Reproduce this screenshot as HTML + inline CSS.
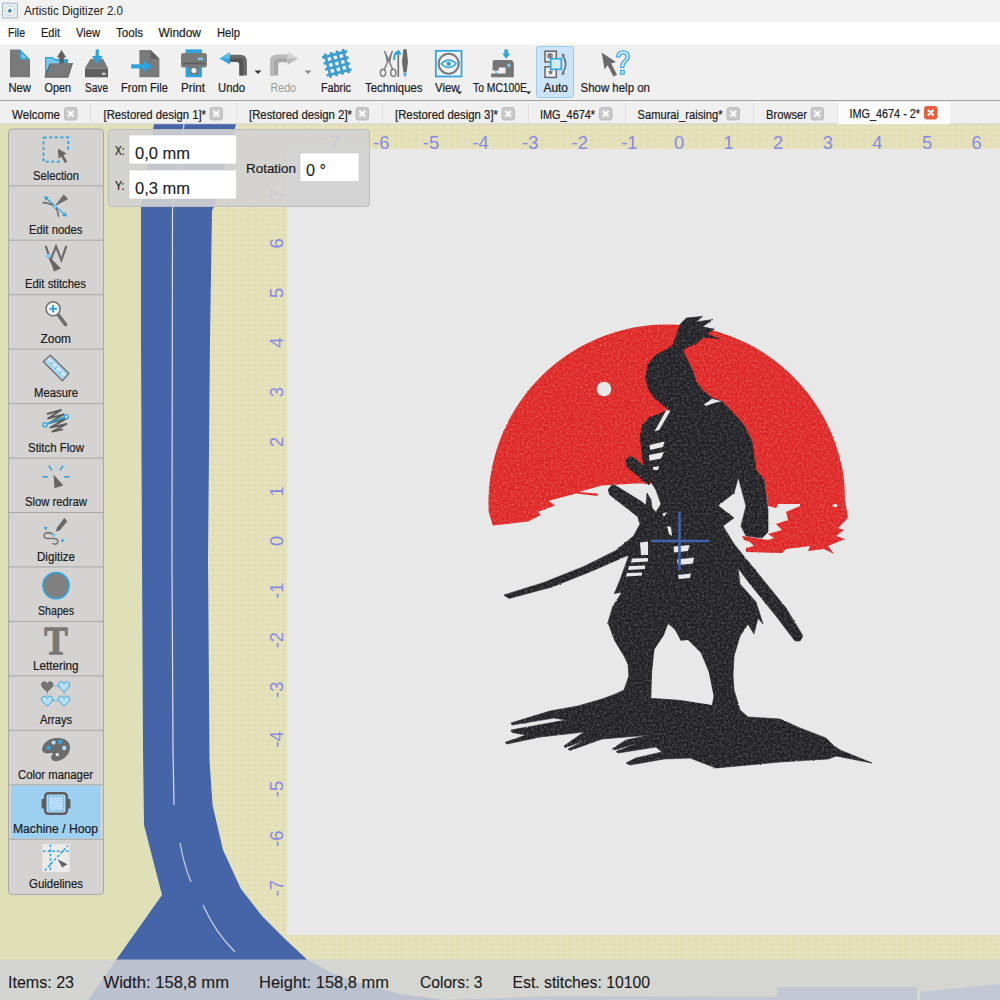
<!DOCTYPE html>
<html lang="en"><head><meta charset="utf-8"><title>Artistic Digitizer 2.0</title>
<style>
html,body{margin:0;padding:0;background:#f0f0f0;overflow:hidden}
svg{display:block}
text{font-family:"Liberation Sans",sans-serif;white-space:pre}
</style></head><body>
<svg width="1000" height="1000" viewBox="0 0 1000 1000">
<defs>
<pattern id="linen" width="7" height="5" patternUnits="userSpaceOnUse">
<rect width="7" height="5" fill="#e3e0b8"/>
<rect x="0" y="0" width="7" height="1" fill="#cfcb9e" opacity=".13"/>
<rect x="0" y="2" width="7" height="1" fill="#f3f0d6" opacity=".2"/>
<rect x="0" y="0" width="1" height="5" fill="#f3f0d6" opacity=".2"/>
<rect x="3" y="0" width="1" height="5" fill="#cfcb9e" opacity=".11"/>
<rect x="5" y="0" width="1" height="5" fill="#efecce" opacity=".12"/>
</pattern>
</defs>
<rect x="0" y="124" width="1000" height="876" fill="#dfe0b7"/>
<rect x="205" y="124" width="795" height="836" fill="url(#linen)"/>
<rect x="205" y="960" width="795" height="40" fill="#e3dfb3"/>
<rect x="287" y="149" width="713" height="786" fill="#e8e8e8"/>
<path d="M154,124 L236,124 L214,207 L212,210 L210,340 L208,560 L209.5,760 L212.5,805 L223,850 L241,889 L262,916 L286,940 L307,959.5 L330,972 L350,980 L400,994 L445,1000 L88,1000 L116,960 L162,895 L144,825 L143,750 L142,560 L141,340 L141,207 Z" fill="#4565a8"/>
<path d="M777,987 H917 V1000 H777 Z M920,992 L1000,984 V1000 H920 Z M445,1000 L560,996 L777,997 V1000 Z" fill="#6f88bd"/>
<path d="M184,124 L172.5,210 L172,560 L173,750 L174,805" fill="none" stroke="#d9dde6" stroke-width="1.2"/>
<path d="M180,843 Q184,865 191,882" fill="none" stroke="#cfd5e3" stroke-width="1.2"/>
<path d="M203,905 Q215,932 235,952" fill="none" stroke="#cfd5e3" stroke-width="1.2"/>
<text x="331.8" y="148.6" font-size="18.4" text-anchor="middle" fill="#8888e6" >-7</text>
<text x="381.4" y="148.6" font-size="18.4" text-anchor="middle" fill="#8888e6" >-6</text>
<text x="431.0" y="148.6" font-size="18.4" text-anchor="middle" fill="#8888e6" >-5</text>
<text x="480.6" y="148.6" font-size="18.4" text-anchor="middle" fill="#8888e6" >-4</text>
<text x="530.2" y="148.6" font-size="18.4" text-anchor="middle" fill="#8888e6" >-3</text>
<text x="579.8" y="148.6" font-size="18.4" text-anchor="middle" fill="#8888e6" >-2</text>
<text x="629.4" y="148.6" font-size="18.4" text-anchor="middle" fill="#8888e6" >-1</text>
<text x="679.0" y="148.6" font-size="18.4" text-anchor="middle" fill="#8888e6" >0</text>
<text x="728.6" y="148.6" font-size="18.4" text-anchor="middle" fill="#8888e6" >1</text>
<text x="778.2" y="148.6" font-size="18.4" text-anchor="middle" fill="#8888e6" >2</text>
<text x="827.8" y="148.6" font-size="18.4" text-anchor="middle" fill="#8888e6" >3</text>
<text x="877.4" y="148.6" font-size="18.4" text-anchor="middle" fill="#8888e6" >4</text>
<text x="927.0" y="148.6" font-size="18.4" text-anchor="middle" fill="#8888e6" >5</text>
<text x="976.6" y="148.6" font-size="18.4" text-anchor="middle" fill="#8888e6" >6</text>
<text transform="translate(282.6,888.2) rotate(-90)" font-size="18.4" text-anchor="middle" fill="#8888e6">-7</text>
<text transform="translate(282.6,838.6) rotate(-90)" font-size="18.4" text-anchor="middle" fill="#8888e6">-6</text>
<text transform="translate(282.6,789.0) rotate(-90)" font-size="18.4" text-anchor="middle" fill="#8888e6">-5</text>
<text transform="translate(282.6,739.4) rotate(-90)" font-size="18.4" text-anchor="middle" fill="#8888e6">-4</text>
<text transform="translate(282.6,689.8) rotate(-90)" font-size="18.4" text-anchor="middle" fill="#8888e6">-3</text>
<text transform="translate(282.6,640.2) rotate(-90)" font-size="18.4" text-anchor="middle" fill="#8888e6">-2</text>
<text transform="translate(282.6,590.6) rotate(-90)" font-size="18.4" text-anchor="middle" fill="#8888e6">-1</text>
<text transform="translate(282.6,541.0) rotate(-90)" font-size="18.4" text-anchor="middle" fill="#8888e6">0</text>
<text transform="translate(282.6,491.4) rotate(-90)" font-size="18.4" text-anchor="middle" fill="#8888e6">1</text>
<text transform="translate(282.6,441.8) rotate(-90)" font-size="18.4" text-anchor="middle" fill="#8888e6">2</text>
<text transform="translate(282.6,392.2) rotate(-90)" font-size="18.4" text-anchor="middle" fill="#8888e6">3</text>
<text transform="translate(282.6,342.6) rotate(-90)" font-size="18.4" text-anchor="middle" fill="#8888e6">4</text>
<text transform="translate(282.6,293.0) rotate(-90)" font-size="18.4" text-anchor="middle" fill="#8888e6">5</text>
<text transform="translate(282.6,243.4) rotate(-90)" font-size="18.4" text-anchor="middle" fill="#8888e6">6</text>
<text transform="translate(282.6,193.8) rotate(-90)" font-size="18.4" text-anchor="middle" fill="#8888e6">7</text>
<defs><filter id="emb" x="460" y="300" width="440" height="490" filterUnits="userSpaceOnUse" color-interpolation-filters="sRGB">
<feTurbulence type="fractalNoise" baseFrequency="0.45" numOctaves="2" seed="7" result="n"/>
<feDisplacementMap in="SourceGraphic" in2="n" scale="1.8" xChannelSelector="R" yChannelSelector="G" result="d"/>
<feColorMatrix in="n" type="matrix" values="0 0 0 0 1  0 0 0 0 1  0 0 0 0 1  0 0 0.45 0 -0.17" result="hl"/>
<feComposite in="hl" in2="d" operator="in" result="hl2"/>
<feMerge><feMergeNode in="d"/><feMergeNode in="hl2"/></feMerge>
</filter></defs>
<g filter="url(#emb)">
<path d="M488.7,512.0 L488.5,505.9 L488.5,499.8 L488.7,493.7 L489.2,487.6 L489.8,481.5 L490.6,475.5 L491.7,469.5 L492.9,463.5 L494.4,457.6 L496.0,451.7 L497.9,445.9 L499.9,440.2 L502.2,434.5 L504.6,428.9 L507.2,423.4 L510.0,418.0 L513.0,412.7 L516.2,407.5 L519.6,402.4 L523.1,397.4 L526.8,392.5 L530.6,387.8 L534.7,383.2 L538.8,378.8 L543.1,374.5 L547.6,370.3 L552.2,366.3 L556.9,362.5 L561.8,358.8 L566.8,355.3 L571.9,351.9 L577.1,348.8 L582.4,345.8 L587.9,343.0 L593.4,340.4 L599.0,338.0 L604.6,335.7 L610.4,333.7 L616.2,331.9 L622.1,330.2 L628.0,328.8 L634.0,327.6 L640.0,326.6 L646.0,325.7 L652.1,325.1 L658.2,324.7 L664.3,324.5 L670.4,324.5 L676.5,324.8 L682.6,325.2 L688.6,325.8 L694.7,326.7 L700.7,327.7 L706.6,329.0 L712.6,330.4 L718.4,332.1 L724.2,333.9 L730.0,336.0 L735.7,338.2 L741.2,340.7 L746.8,343.3 L752.2,346.1 L757.5,349.1 L762.7,352.3 L767.8,355.7 L772.7,359.2 L777.6,362.9 L782.3,366.7 L786.9,370.8 L791.3,374.9 L795.6,379.3 L799.8,383.7 L803.8,388.3 L807.6,393.1 L811.3,397.9 L814.8,402.9 L818.1,408.0 L821.3,413.3 L824.3,418.6 L827.1,424.0 L829.7,429.5 L832.1,435.1 L834.3,440.8 L836.3,446.5 L838.2,452.4 L839.8,458.2 L841.2,464.2 L842.5,470.1 L843.5,476.2 L844.3,482.2 L845.0,500.0 L848.0,518.0 L838.0,528.0 L844.0,530.0 L836.0,536.0 L845.0,539.0 L828.0,546.0 L834.0,554.0 L824.0,549.0 L808.0,551.0 L810.0,546.0 L786.0,549.0 L782.0,553.0 L746.0,552.0 L746.0,548.0 L754.0,546.0 L750.0,542.0 L744.0,540.0 L742.0,536.0 L768.0,540.0 L774.0,538.0 L768.0,534.0 L782.0,530.0 L776.0,524.0 L788.0,520.0 L786.0,512.0 L800.0,506.0 L800.0,504.0 L778.0,504.0 L776.0,508.0 L768.0,506.0 L764.0,480.0 L737.0,478.0 L645.0,484.0 L640.0,483.2 L601.6,485.6 L579.0,492.0 L597.6,493.6 L597.6,496.0 L576.0,493.5 L548.8,500.8 L555.0,505.6 L537.6,512.0 L540.8,515.0 L528.0,521.6 L492.8,525.6 Z" fill="#de2524" />
<path d="M686.4,318.0 L702.4,316.4 L696.0,322.0 L712.8,319.6 L702.4,326.8 L714.4,329.2 L706.4,334.0 L719.2,338.8 L704.0,337.2 L696.0,343.6 L686.4,347.6 L683.0,351.0 L686.4,358.0 L692.8,370.8 L696.0,382.0 L704.0,391.6 L712.0,398.0 L721.6,401.2 L732.8,412.4 L744.0,425.2 L752.0,441.2 L756.0,470.0 L764.0,480.0 L768.0,510.0 L768.0,532.0 L762.0,538.0 L746.0,536.0 L741.0,526.0 L746.0,506.0 L739.0,480.0 L737.6,476.0 L737.6,480.0 L734.0,493.0 L718.0,505.6 L734.0,518.0 L723.0,526.0 L734.0,544.0 L760.0,576.0 L786.0,608.0 L803.0,636.0 L800.0,641.0 L795.0,641.0 L776.0,616.0 L750.0,584.0 L738.0,568.0 L740.0,584.0 L756.0,602.0 L763.0,624.0 L758.0,618.0 L754.0,634.0 L748.0,624.0 L740.0,636.0 L734.0,656.0 L733.0,675.0 L734.0,690.0 L740.0,710.0 L748.0,717.0 L780.0,719.0 L800.0,728.0 L826.0,738.0 L834.0,746.0 L840.0,750.0 L872.0,763.0 L836.0,756.0 L828.0,759.0 L780.0,762.0 L716.0,768.0 L690.0,758.0 L664.0,759.0 L630.0,765.0 L626.0,763.0 L636.0,758.0 L662.0,752.0 L656.0,747.0 L618.0,753.0 L616.0,751.6 L638.0,743.0 L614.0,750.0 L612.0,749.0 L626.0,740.0 L650.0,735.0 L602.0,739.0 L570.0,750.4 L568.0,749.0 L586.0,740.0 L565.0,747.6 L564.0,746.0 L584.0,732.0 L540.0,737.0 L507.0,744.0 L505.0,742.4 L526.0,735.0 L512.0,732.4 L511.0,730.0 L566.0,720.0 L554.0,718.0 L512.0,725.0 L511.0,723.0 L550.0,711.0 L578.0,706.0 L602.0,699.0 L614.4,694.4 L624.0,690.0 L628.8,676.0 L628.0,664.0 L624.0,656.0 L614.4,640.0 L608.0,622.4 L612.8,606.4 L622.0,592.0 L614.4,593.6 L620.0,580.0 L627.2,560.0 L629.0,555.0 L624.0,557.0 L592.0,571.0 L552.0,587.0 L509.0,598.4 L504.0,595.0 L544.0,582.4 L584.0,566.4 L616.0,550.4 L633.6,536.0 L640.0,524.0 L637.0,514.0 L610.0,493.0 L609.0,489.0 L613.0,486.0 L640.0,503.0 L646.0,505.0 L647.0,493.0 L651.0,500.0 L652.0,508.0 L656.0,512.0 L661.0,504.0 L656.0,490.0 L648.0,477.0 L646.4,481.6 L627.0,464.0 L626.4,460.8 L630.4,458.4 L644.8,470.4 L643.0,461.0 L641.0,445.0 L640.0,438.0 L642.4,425.2 L649.6,417.2 L659.2,414.0 L668.8,410.0 L664.0,406.0 L654.4,398.0 L648.0,388.4 L645.6,377.2 L648.0,364.4 L656.0,354.8 L667.2,349.2 L672.8,345.2 L676.8,334.0 L680.0,324.4 Z" fill="#1f1f24" stroke="#1f1f24" stroke-width="0.6" stroke-linejoin="round"/>
<path d="M625.8,460.6 L629.2,456.6 L633.0,457.4 L652.0,473.0 L649.0,485.0 L627.4,467.2 Z" fill="#1f1f24" stroke="#1f1f24" stroke-width="0.8" stroke-linejoin="round"/>
<path d="M608.4,489.6 L611.6,485.4 L615.4,485.6 L642.0,502.0 L664.0,522.0 L655.0,530.0 L637.0,516.0 L609.6,494.6 Z" fill="#1f1f24" stroke="#1f1f24" stroke-width="0.8" stroke-linejoin="round"/>
</g>
<circle cx="604" cy="389" r="7.3" fill="#e8e8e8"/>
<ellipse cx="835" cy="505.6" rx="2.6" ry="1.6" fill="#e8e8e8"/>
<path d="M668.0,624.0 L664.0,635.0 L654.4,649.6 L652.0,672.0 L651.2,698.0 L680.0,700.0 L712.0,705.0 L713.6,696.0 L708.8,672.0 L700.8,652.8 L688.0,640.0 L680.8,640.8 L675.0,630.0 L672.0,627.0 Z" fill="#e8e8e8" />
<path d="M666.4,410.0 L670.4,410.8 L659.2,430.0 L654.4,431.6 Z" fill="#e8e8e8" />
<path d="M704.0,404.4 L712.0,398.8 L721.6,401.2 L715.2,402.8 L705.6,406.0 Z" fill="#e8e8e8" />
<path d="M649.6,445.0 L664.5,441.5 L663.0,447.0 L650.0,450.0 Z" fill="#e8e8e8" />
<path d="M649.0,455.0 L664.0,452.0 L661.0,458.5 L649.5,460.8 Z" fill="#e8e8e8" />
<path d="M652.8,467.0 L659.2,466.2 L658.0,470.0 L653.5,470.0 Z" fill="#e8e8e8" />
<path d="M673.6,546.5 L689.6,545.0 L688.0,551.0 L674.0,552.5 Z" fill="#e8e8e8" />
<path d="M677.0,559.5 L694.0,557.5 L693.0,563.5 L678.0,565.0 Z" fill="#e8e8e8" />
<path d="M678.0,575.0 L691.0,573.5 L690.0,578.0 L679.0,579.0 Z" fill="#e8e8e8" />
<path d="M662.5,513.5 L667.0,512.0 L664.0,517.0 Z" fill="#e8e8e8" />
<path d="M667.0,526.0 L671.0,527.0 L672.0,536.0 L669.0,534.0 Z" fill="#e8e8e8" />
<path d="M640.0,542.5 L648.0,541.5 L648.0,555.0 L641.0,555.0 Z" fill="#e8e8e8" />
<path d="M632.0,558.5 L648.0,558.0 L648.0,561.5 L631.0,562.5 Z" fill="#e8e8e8" />
<path d="M629.0,566.0 L645.0,565.5 L645.0,569.0 L628.0,570.0 Z" fill="#e8e8e8" />
<path d="M627.0,573.0 L642.0,572.5 L642.0,575.5 L626.0,576.5 Z" fill="#e8e8e8" />
<path d="M651,541 H709 M679.5,512 V570.5" stroke="#3f62a9" stroke-width="2.6" fill="none"/>
<rect x="108.5" y="129.5" width="261" height="77" rx="3" fill="#d2d2d2" fill-opacity=".9" stroke="#bcbcbc" stroke-width="1"/>
<rect x="129" y="135" width="107.5" height="29" fill="#ffffff" stroke="#c8c8c8" stroke-width=".6"/>
<rect x="129" y="170" width="107.5" height="29" fill="#ffffff" stroke="#c8c8c8" stroke-width=".6"/>
<rect x="300" y="153" width="59" height="28.5" fill="#ffffff" stroke="#c8c8c8" stroke-width=".6"/>
<text x="115.0" y="155.0" font-size="12.5" text-anchor="start" fill="#1b1b1b" textLength="9.5" lengthAdjust="spacingAndGlyphs" stroke="#1b1b1b" stroke-width="0.20" >X:</text>
<text x="115.0" y="190.0" font-size="12.5" text-anchor="start" fill="#1b1b1b" textLength="9.5" lengthAdjust="spacingAndGlyphs" stroke="#1b1b1b" stroke-width="0.20" >Y:</text>
<text x="135.0" y="158.8" font-size="16.0" text-anchor="start" fill="#1b1b1b" textLength="55.0" lengthAdjust="spacingAndGlyphs" stroke="#1b1b1b" stroke-width="0.12" >0,0 mm</text>
<text x="135.0" y="193.8" font-size="16.0" text-anchor="start" fill="#1b1b1b" textLength="55.0" lengthAdjust="spacingAndGlyphs" stroke="#1b1b1b" stroke-width="0.12" >0,3 mm</text>
<text x="246.0" y="173.0" font-size="13.2" text-anchor="start" fill="#1b1b1b" textLength="50.0" lengthAdjust="spacingAndGlyphs" stroke="#1b1b1b" stroke-width="0.20" >Rotation</text>
<text x="306.0" y="176.0" font-size="16.0" text-anchor="start" fill="#1b1b1b" textLength="20.0" lengthAdjust="spacingAndGlyphs" stroke="#1b1b1b" stroke-width="0.12" >0 °</text>
<rect x="8.5" y="129" width="95" height="765.5" rx="3.5" fill="#d4d3d2" stroke="#a9a9a9" stroke-width="1"/>
<rect x="11" y="785.5" width="89.5" height="53" fill="#9ed0f1"/>
<text x="33.0" y="179.5" font-size="12.0" text-anchor="start" fill="#1b1b1b" textLength="46.0" lengthAdjust="spacingAndGlyphs" stroke="#1b1b1b" stroke-width="0.20" >Selection</text>
<path d="M9,185.75 H103" stroke="#a8a8a8" stroke-width="1"/>
<text x="29.0" y="234.0" font-size="12.0" text-anchor="start" fill="#1b1b1b" textLength="53.5" lengthAdjust="spacingAndGlyphs" stroke="#1b1b1b" stroke-width="0.20" >Edit nodes</text>
<path d="M9,240.21 H103" stroke="#a8a8a8" stroke-width="1"/>
<text x="25.0" y="288.4" font-size="12.0" text-anchor="start" fill="#1b1b1b" textLength="61.0" lengthAdjust="spacingAndGlyphs" stroke="#1b1b1b" stroke-width="0.20" >Edit stitches</text>
<path d="M9,294.67 H103" stroke="#a8a8a8" stroke-width="1"/>
<text x="40.5" y="342.9" font-size="12.0" text-anchor="start" fill="#1b1b1b" textLength="30.5" lengthAdjust="spacingAndGlyphs" stroke="#1b1b1b" stroke-width="0.20" >Zoom</text>
<path d="M9,349.13 H103" stroke="#a8a8a8" stroke-width="1"/>
<text x="34.0" y="397.3" font-size="12.0" text-anchor="start" fill="#1b1b1b" textLength="44.0" lengthAdjust="spacingAndGlyphs" stroke="#1b1b1b" stroke-width="0.20" >Measure</text>
<path d="M9,403.59 H103" stroke="#a8a8a8" stroke-width="1"/>
<text x="28.0" y="451.8" font-size="12.0" text-anchor="start" fill="#1b1b1b" textLength="56.0" lengthAdjust="spacingAndGlyphs" stroke="#1b1b1b" stroke-width="0.20" >Stitch Flow</text>
<path d="M9,458.05 H103" stroke="#a8a8a8" stroke-width="1"/>
<text x="25.0" y="506.3" font-size="12.0" text-anchor="start" fill="#1b1b1b" textLength="62.0" lengthAdjust="spacingAndGlyphs" stroke="#1b1b1b" stroke-width="0.20" >Slow redraw</text>
<path d="M9,512.51 H103" stroke="#a8a8a8" stroke-width="1"/>
<text x="37.0" y="560.7" font-size="12.0" text-anchor="start" fill="#1b1b1b" textLength="38.0" lengthAdjust="spacingAndGlyphs" stroke="#1b1b1b" stroke-width="0.20" >Digitize</text>
<path d="M9,566.97 H103" stroke="#a8a8a8" stroke-width="1"/>
<text x="38.0" y="615.2" font-size="12.0" text-anchor="start" fill="#1b1b1b" textLength="36.0" lengthAdjust="spacingAndGlyphs" stroke="#1b1b1b" stroke-width="0.20" >Shapes</text>
<path d="M9,621.43 H103" stroke="#a8a8a8" stroke-width="1"/>
<text x="33.0" y="669.6" font-size="12.0" text-anchor="start" fill="#1b1b1b" textLength="45.5" lengthAdjust="spacingAndGlyphs" stroke="#1b1b1b" stroke-width="0.20" >Lettering</text>
<path d="M9,675.89 H103" stroke="#a8a8a8" stroke-width="1"/>
<text x="40.0" y="724.1" font-size="12.0" text-anchor="start" fill="#1b1b1b" textLength="32.0" lengthAdjust="spacingAndGlyphs" stroke="#1b1b1b" stroke-width="0.20" >Arrays</text>
<path d="M9,730.35 H103" stroke="#a8a8a8" stroke-width="1"/>
<text x="18.0" y="778.6" font-size="12.0" text-anchor="start" fill="#1b1b1b" textLength="75.0" lengthAdjust="spacingAndGlyphs" stroke="#1b1b1b" stroke-width="0.20" >Color manager</text>
<path d="M9,784.81 H103" stroke="#a8a8a8" stroke-width="1"/>
<text x="13.0" y="833.0" font-size="12.0" text-anchor="start" fill="#1b1b1b" textLength="85.0" lengthAdjust="spacingAndGlyphs" stroke="#1b1b1b" stroke-width="0.20" >Machine / Hoop</text>
<path d="M9,839.27 H103" stroke="#a8a8a8" stroke-width="1"/>
<text x="29.0" y="887.5" font-size="12.0" text-anchor="start" fill="#1b1b1b" textLength="54.0" lengthAdjust="spacingAndGlyphs" stroke="#1b1b1b" stroke-width="0.20" >Guidelines</text>
<rect x="0" y="0" width="1000" height="22.5" fill="#f2f2f2"/>
<text x="24.0" y="15.3" font-size="12.0" text-anchor="start" fill="#222222" textLength="99.0" lengthAdjust="spacingAndGlyphs" >Artistic Digitizer 2.0</text>
<rect x="0" y="22" width="1000" height="22.5" fill="#ffffff"/>
<text x="8.0" y="36.9" font-size="12.0" text-anchor="start" fill="#1b1b1b" textLength="17.0" lengthAdjust="spacingAndGlyphs" stroke="#1b1b1b" stroke-width="0.20" >File</text>
<text x="41.0" y="36.9" font-size="12.0" text-anchor="start" fill="#1b1b1b" textLength="19.0" lengthAdjust="spacingAndGlyphs" stroke="#1b1b1b" stroke-width="0.20" >Edit</text>
<text x="76.0" y="36.9" font-size="12.0" text-anchor="start" fill="#1b1b1b" textLength="24.0" lengthAdjust="spacingAndGlyphs" stroke="#1b1b1b" stroke-width="0.20" >View</text>
<text x="116.0" y="36.9" font-size="12.0" text-anchor="start" fill="#1b1b1b" textLength="27.0" lengthAdjust="spacingAndGlyphs" stroke="#1b1b1b" stroke-width="0.20" >Tools</text>
<text x="158.5" y="36.9" font-size="12.0" text-anchor="start" fill="#1b1b1b" textLength="42.5" lengthAdjust="spacingAndGlyphs" stroke="#1b1b1b" stroke-width="0.20" >Window</text>
<text x="217.0" y="36.9" font-size="12.0" text-anchor="start" fill="#1b1b1b" textLength="23.0" lengthAdjust="spacingAndGlyphs" stroke="#1b1b1b" stroke-width="0.20" >Help</text>
<rect x="0" y="44.5" width="1000" height="56" fill="#f0f0f0"/>
<rect x="536.5" y="46.5" width="37" height="51" rx="2" fill="#cce4f7" stroke="#9acbee" stroke-width="1"/>
<text x="8.5" y="92.3" font-size="12.0" text-anchor="start" fill="#1b1b1b" textLength="22.5" lengthAdjust="spacingAndGlyphs" stroke="#1b1b1b" stroke-width="0.20" >New</text>
<text x="44.5" y="92.3" font-size="12.0" text-anchor="start" fill="#1b1b1b" textLength="26.5" lengthAdjust="spacingAndGlyphs" stroke="#1b1b1b" stroke-width="0.20" >Open</text>
<text x="85.0" y="92.3" font-size="12.0" text-anchor="start" fill="#1b1b1b" textLength="23.0" lengthAdjust="spacingAndGlyphs" stroke="#1b1b1b" stroke-width="0.20" >Save</text>
<text x="121.0" y="92.3" font-size="12.0" text-anchor="start" fill="#1b1b1b" textLength="47.0" lengthAdjust="spacingAndGlyphs" stroke="#1b1b1b" stroke-width="0.20" >From File</text>
<text x="181.0" y="92.3" font-size="12.0" text-anchor="start" fill="#1b1b1b" textLength="24.0" lengthAdjust="spacingAndGlyphs" stroke="#1b1b1b" stroke-width="0.20" >Print</text>
<text x="218.0" y="92.3" font-size="12.0" text-anchor="start" fill="#1b1b1b" textLength="27.0" lengthAdjust="spacingAndGlyphs" stroke="#1b1b1b" stroke-width="0.20" >Undo</text>
<text x="270.5" y="92.3" font-size="12.0" text-anchor="start" fill="#9a9a9a" textLength="25.5" lengthAdjust="spacingAndGlyphs" >Redo</text>
<text x="321.0" y="92.3" font-size="12.0" text-anchor="start" fill="#1b1b1b" textLength="30.0" lengthAdjust="spacingAndGlyphs" stroke="#1b1b1b" stroke-width="0.20" >Fabric</text>
<text x="365.0" y="92.3" font-size="12.0" text-anchor="start" fill="#1b1b1b" textLength="57.5" lengthAdjust="spacingAndGlyphs" stroke="#1b1b1b" stroke-width="0.20" >Techniques</text>
<text x="435.0" y="92.3" font-size="12.0" text-anchor="start" fill="#1b1b1b" textLength="24.5" lengthAdjust="spacingAndGlyphs" stroke="#1b1b1b" stroke-width="0.20" >View</text>
<text x="473.0" y="92.3" font-size="12.0" text-anchor="start" fill="#1b1b1b" textLength="54.0" lengthAdjust="spacingAndGlyphs" stroke="#1b1b1b" stroke-width="0.20" >To MC100E</text>
<text x="543.5" y="92.3" font-size="12.0" text-anchor="start" fill="#1b1b1b" textLength="24.5" lengthAdjust="spacingAndGlyphs" stroke="#1b1b1b" stroke-width="0.20" >Auto</text>
<text x="580.5" y="92.3" font-size="12.0" text-anchor="start" fill="#1b1b1b" textLength="69.5" lengthAdjust="spacingAndGlyphs" stroke="#1b1b1b" stroke-width="0.20" >Show help on</text>
<path d="M254.5,70.5 h7 l-3.5,3.5 z" fill="#333"/>
<path d="M304.5,70.5 h7 l-3.5,3.5 z" fill="#888"/>
<path d="M457.0,91.5 h5 l-2.5,2.8 z" fill="#222"/>
<path d="M526.0,91.5 h5 l-2.5,2.8 z" fill="#222"/>
<rect x="0" y="100" width="1000" height="1" fill="#a0a0a0"/>
<rect x="0" y="101" width="1000" height="23" fill="#f0f0f0"/>
<rect x="0" y="123" width="1000" height="1.2" fill="#d9d9d9"/>
<rect x="837.5" y="102" width="112.5" height="22.2" fill="#fbfbfb"/>
<text x="12.0" y="118.9" font-size="12.0" text-anchor="start" fill="#1b1b1b" textLength="48.0" lengthAdjust="spacingAndGlyphs" stroke="#1b1b1b" stroke-width="0.20" >Welcome</text>
<rect x="64.5" y="107.5" width="12.5" height="12.5" rx="2" fill="#c9c9c9" stroke="#b4b4b4" stroke-width=".8"/>
<path d="M68.0,111.0 l5.5,5.5 m0,-5.5 l-5.5,5.5" stroke="#ffffff" stroke-width="1.9" fill="none"/>
<text x="103.5" y="118.9" font-size="12.0" text-anchor="start" fill="#1b1b1b" textLength="102.5" lengthAdjust="spacingAndGlyphs" stroke="#1b1b1b" stroke-width="0.20" >[Restored design 1]*</text>
<rect x="210.0" y="107.5" width="12.5" height="12.5" rx="2" fill="#c9c9c9" stroke="#b4b4b4" stroke-width=".8"/>
<path d="M213.5,111.0 l5.5,5.5 m0,-5.5 l-5.5,5.5" stroke="#ffffff" stroke-width="1.9" fill="none"/>
<text x="249.0" y="118.9" font-size="12.0" text-anchor="start" fill="#1b1b1b" textLength="103.0" lengthAdjust="spacingAndGlyphs" stroke="#1b1b1b" stroke-width="0.20" >[Restored design 2]*</text>
<rect x="356.0" y="107.5" width="12.5" height="12.5" rx="2" fill="#c9c9c9" stroke="#b4b4b4" stroke-width=".8"/>
<path d="M359.5,111.0 l5.5,5.5 m0,-5.5 l-5.5,5.5" stroke="#ffffff" stroke-width="1.9" fill="none"/>
<text x="395.0" y="118.9" font-size="12.0" text-anchor="start" fill="#1b1b1b" textLength="103.0" lengthAdjust="spacingAndGlyphs" stroke="#1b1b1b" stroke-width="0.20" >[Restored design 3]*</text>
<rect x="502.0" y="107.5" width="12.5" height="12.5" rx="2" fill="#c9c9c9" stroke="#b4b4b4" stroke-width=".8"/>
<path d="M505.5,111.0 l5.5,5.5 m0,-5.5 l-5.5,5.5" stroke="#ffffff" stroke-width="1.9" fill="none"/>
<text x="540.0" y="118.9" font-size="12.0" text-anchor="start" fill="#1b1b1b" textLength="55.0" lengthAdjust="spacingAndGlyphs" stroke="#1b1b1b" stroke-width="0.20" >IMG_4674*</text>
<rect x="599.5" y="107.5" width="12.5" height="12.5" rx="2" fill="#c9c9c9" stroke="#b4b4b4" stroke-width=".8"/>
<path d="M603.0,111.0 l5.5,5.5 m0,-5.5 l-5.5,5.5" stroke="#ffffff" stroke-width="1.9" fill="none"/>
<text x="637.5" y="118.9" font-size="12.0" text-anchor="start" fill="#1b1b1b" textLength="85.0" lengthAdjust="spacingAndGlyphs" stroke="#1b1b1b" stroke-width="0.20" >Samurai_raising*</text>
<rect x="727.0" y="107.5" width="12.5" height="12.5" rx="2" fill="#c9c9c9" stroke="#b4b4b4" stroke-width=".8"/>
<path d="M730.5,111.0 l5.5,5.5 m0,-5.5 l-5.5,5.5" stroke="#ffffff" stroke-width="1.9" fill="none"/>
<text x="766.0" y="118.9" font-size="12.0" text-anchor="start" fill="#1b1b1b" textLength="41.0" lengthAdjust="spacingAndGlyphs" stroke="#1b1b1b" stroke-width="0.20" >Browser</text>
<rect x="811.0" y="107.5" width="12.5" height="12.5" rx="2" fill="#c9c9c9" stroke="#b4b4b4" stroke-width=".8"/>
<path d="M814.5,111.0 l5.5,5.5 m0,-5.5 l-5.5,5.5" stroke="#ffffff" stroke-width="1.9" fill="none"/>
<text x="849.5" y="117.9" font-size="12.0" text-anchor="start" fill="#1b1b1b" textLength="70.5" lengthAdjust="spacingAndGlyphs" stroke="#1b1b1b" stroke-width="0.20" >IMG_4674 - 2*</text>
<rect x="924.5" y="106.5" width="12.5" height="12.5" rx="2" fill="#e8603c" stroke="#d9502c" stroke-width=".8"/>
<path d="M928.0,110.0 l5.5,5.5 m0,-5.5 l-5.5,5.5" stroke="#ffffff" stroke-width="1.9" fill="none"/>
<rect x="90" y="103" width="1" height="20" fill="#e2e2e2"/>
<rect x="236" y="103" width="1" height="20" fill="#e2e2e2"/>
<rect x="382" y="103" width="1" height="20" fill="#e2e2e2"/>
<rect x="528" y="103" width="1" height="20" fill="#e2e2e2"/>
<rect x="625" y="103" width="1" height="20" fill="#e2e2e2"/>
<rect x="753" y="103" width="1" height="20" fill="#e2e2e2"/>
<rect x="837" y="103" width="1" height="20" fill="#e2e2e2"/>
<rect x="0" y="959.5" width="1000" height="40.5" fill="#d2d3d6" fill-opacity=".84"/>
<text x="8.0" y="987.5" font-size="16.0" text-anchor="start" fill="#1b1b1b" textLength="66.0" lengthAdjust="spacingAndGlyphs" stroke="#1b1b1b" stroke-width="0.12" >Items: 23</text>
<text x="103.5" y="987.5" font-size="16.0" text-anchor="start" fill="#1b1b1b" textLength="125.5" lengthAdjust="spacingAndGlyphs" stroke="#1b1b1b" stroke-width="0.12" >Width: 158,8 mm</text>
<text x="259.0" y="987.5" font-size="16.0" text-anchor="start" fill="#1b1b1b" textLength="130.0" lengthAdjust="spacingAndGlyphs" stroke="#1b1b1b" stroke-width="0.12" >Height: 158,8 mm</text>
<text x="420.0" y="987.5" font-size="16.0" text-anchor="start" fill="#1b1b1b" textLength="62.5" lengthAdjust="spacingAndGlyphs" stroke="#1b1b1b" stroke-width="0.12" >Colors: 3</text>
<text x="512.5" y="987.5" font-size="16.0" text-anchor="start" fill="#1b1b1b" textLength="137.5" lengthAdjust="spacingAndGlyphs" stroke="#1b1b1b" stroke-width="0.12" >Est. stitches: 10100</text>
<rect x="2.5" y="3.2" width="15" height="14.8" fill="#e4eef6" stroke="#a9b7c3" stroke-width="1"/>
<circle cx="9.8" cy="10.7" r="4.6" fill="#ffffff" stroke="#b5c6d4" stroke-width="1.2" stroke-dasharray="2 1.2"/>
<rect x="8" y="8.9" width="3.6" height="3.6" transform="rotate(45 9.8 10.7)" fill="#4b8bb9"/>
<path d="M10,49.4 H20 L30,59.4 V77.2 H10 Z" fill="#7a7a7a"/>
<path d="M20,49.4 L30,59.4 H20 Z" fill="#2ea3dd"/>
<path d="M21.3,53 L27,58.2 H21.3 Z" fill="#7cc8ef"/>
<path d="M45,57 H53 L55,59 H68 V77 H45 Z" fill="#2ea3dd"/>
<path d="M46.3,58.5 H52.5 L54.5,60.5 H62 V70 H46.3 Z" fill="#7cc8ef"/>
<path d="M61.5,50 L66.3,57.5 H63.8 V64 H59.3 V57.5 H56.8 Z" fill="#5f5f5f"/>
<path d="M50,63.6 L72.5,63 L68,77 H45 Z" fill="#7a7a7a"/>
<path d="M45,77 L50,63.6 M45,77.2 H68 M68,77 L72.5,63" stroke="#5f5f5f" stroke-width="1" fill="none"/>
<path d="M90.6,58.8 H103 L108,68 H85 Z" fill="#7a7a7a"/>
<rect x="85" y="68.8" width="23" height="8.5" fill="#5f5f5f"/>
<rect x="85" y="68" width="23" height="1" fill="#8c8c8c"/>
<rect x="102" y="72.7" width="3.6" height="2.2" fill="#cfcfcf"/>
<path d="M95.6,49.4 H98.8 V56 H102.5 L97.2,64.4 L92,56 H95.6 Z" fill="#2ea3dd"/>
<path d="M139.4,50 H150.6 L159.4,58.8 V77.2 H139.4 Z" fill="#7a7a7a"/>
<path d="M150.6,50 L159.4,58.8 H150.6 Z" fill="#5f5f5f"/>
<path d="M131.2,64.2 H143.8 V60.6 L152.5,66.3 L143.8,72 V68.6 H131.2 Z" fill="#2ea3dd"/>
<rect x="185.6" y="49.4" width="16.3" height="5" fill="#2ea3dd"/>
<rect x="185.6" y="64" width="16.3" height="13.2" fill="#2ea3dd"/>
<rect x="181" y="53" width="25.9" height="14.5" rx="2.5" fill="#7a7a7a"/>
<rect x="183" y="62.5" width="22" height="2" fill="#5f5f5f"/>
<rect x="189.4" y="64.4" width="9.3" height="10" fill="#7a7a7a"/>
<circle cx="193.9" cy="70.6" r="2.5" fill="#f2f2f2"/>
<rect x="198" y="57.6" width="5" height="2.4" fill="#7cc8ef"/>
<path d="M230,54.8 H240 Q246.9,54.8 246.9,62 V75.6 H239.4 V64.5 Q239.4,62 236.9,62 H230 Z" fill="#6a6a6a"/>
<path d="M230,58.4 H240 Q243.2,58.4 243.2,62 V75.6 H239.4 V64.5 Q239.4,62 236.9,62 H230 Z" fill="#545454"/>
<path d="M219.4,58.5 L230,52.2 V64.5 Z" fill="#2ea3dd"/>
<path d="M219.4,58.5 L230,52.2 V58.5 Z" fill="#5fbbe8"/>
<path d="M287.5,54.8 H277 Q270,54.8 270,62 V75.6 H278.1 V64.5 Q278.1,62.2 280.5,62.2 H287.5 Z" fill="#a9a9a9"/>
<path d="M287.5,54.8 H277 Q270,54.8 270,62 V75.6 H274 V63 Q274,58.6 278.5,58.6 H287.5 Z" fill="#b9b9b9"/>
<path d="M298.1,58.5 L287.5,51.9 V65 Z" fill="#bdbdbd"/>
<path d="M298.1,58.5 L287.5,51.9 V58.5 Z" fill="#d6d6d6"/>
<g transform="rotate(-14 336.8 63.4)" stroke="#3d9cd0" stroke-width="2.7" fill="none">
<path d="M324,54.2 H349.6"/>
<path d="M324,60.4 H349.6"/>
<path d="M324,66.5 H349.6"/>
<path d="M324,72.7 H349.6"/>
<path d="M327.6,51 V75.8"/>
<path d="M333.8,51 V75.8"/>
<path d="M339.9,51 V75.8"/>
<path d="M346.1,51 V75.8"/>
</g>
<g fill="none" stroke="#7d7d7d" stroke-width="1.5">
<path d="M384.5,51 L392.5,69"/><path d="M392.5,51 L384.5,69"/>
<ellipse cx="383" cy="72.8" rx="2.6" ry="3.6"/><ellipse cx="393.3" cy="72.8" rx="2.6" ry="3.6"/>
</g>
<path d="M384.5,51 L389,61 L386.6,62 Z M392.5,51 L388,61 L390.3,62 Z" fill="#7d7d7d"/>
<path d="M398.3,77 V54" stroke="#6f6f6f" stroke-width="1.6" fill="none"/>
<path d="M394,60 Q394,52.5 398.3,51.5" stroke="#2ea3dd" stroke-width="2" fill="none"/>
<path d="M395.5,54.6 L398.6,49.6 L401.6,54.6 Z" fill="#2ea3dd"/>
<path d="M403.3,49.6 Q405,48.6 406.7,49.6 L408,62 L406.6,72.5 H403.4 L402,62 Z" fill="#6a6a6a"/>
<path d="M403.2,73.2 H406.8 L405,77.4 Z" fill="#2ea3dd"/>
<rect x="435.8" y="50.8" width="25.7" height="25.7" fill="#e6f3fb" stroke="#2ea3dd" stroke-width="1.7"/>
<circle cx="448.7" cy="63.7" r="10" fill="#f4f4f4" stroke="#7b7b7b" stroke-width="2"/>
<path d="M441.3,63.7 Q448.7,56.2 456.2,63.7 Q448.7,71.2 441.3,63.7 Z" fill="#ffffff" stroke="#2ea3dd" stroke-width="1.5"/>
<circle cx="448.7" cy="63.7" r="2.3" fill="#2ea3dd"/>
<path d="M494.3,60 H510 Q513.8,60 513.8,63.8 V77.2 H491.2 V73.4 H505.6 V67.4 H498.8 V70.6 H492.6 V61.7 Q492.6,60 494.3,60 Z" fill="#757575"/>
<circle cx="508.8" cy="65.4" r="1.8" fill="#7cc8ef"/>
<path d="M495.6,70.6 L496.4,73.4" stroke="#2ea3dd" stroke-width="1.1"/>
<path d="M504.3,49.4 H508.1 V53.6 H510.2 L506.2,58.8 L502.3,53.6 H504.3 Z" fill="#2ea3dd"/>
<rect x="545" y="51.2" width="11.3" height="10.8" fill="#e9e9e9" stroke="#666" stroke-width="1.5"/>
<circle cx="550" cy="55.8" r="2.8" fill="#808080"/>
<rect x="545" y="66.8" width="11.3" height="10.6" fill="#f1f1f1" stroke="#666" stroke-width="1.5"/>
<path d="M550.6,69.3 l.9,1.9 2,.2 -1.5,1.4 .4,2 -1.8,-1 -1.8,1 .4,-2 -1.5,-1.4 2,-.2 z" fill="#777"/>
<rect x="550.7" y="58.7" width="10.6" height="10.6" fill="#d4ebf9" stroke="#2ea3dd" stroke-width="1.6"/>
<path d="M563,56 Q568.5,64 563,72.6" fill="none" stroke="#6d6d6d" stroke-width="1.6"/>
<path d="M561.6,53.4 L565.2,54.8 L562.2,57.6 Z M561.4,75.2 L565.2,73.8 L562.2,70.9 Z" fill="#6d6d6d"/>
<path d="M601.6,52.6 L616,62 L611.2,63.4 L617,74.8 L613.4,76.6 L607.6,65.2 L604.6,69.6 Z" fill="#6b6b6b"/>
<path d="M616.6,57 Q617,50.8 623,50.8 Q629.3,50.8 629.3,56.6 Q629.3,60 626,62.2 Q623.8,63.8 623.8,67.5 H620.8 Q620.6,63 623.4,60.6 Q626,58.8 626,56.7 Q626,54 623,54 Q620,54 619.8,57 Z" fill="#c9e8f8" stroke="#2ea3dd" stroke-width="1.1"/>
<rect x="620.6" y="70.4" width="3.6" height="3.8" fill="#c9e8f8" stroke="#2ea3dd" stroke-width="1.1"/>
<path d="M43.5,137.4 H68.2 V151 M60,161.6 H43.5 V137.4" fill="none" stroke="#2ea3dd" stroke-width="1.7" stroke-dasharray="3.2 2.4"/>
<path d="M57.9,148.8 L66.6,153.6 L63.4,155.2 L67.2,161.8 L64.9,163 L61.2,156.4 L58.6,158.8 Z" fill="#666"/>
<path d="M42.4,202.6 Q50,202.8 54.4,206.4 Q58,210 58.6,216.8" fill="none" stroke="#6f6f6f" stroke-width="1.6"/>
<path d="M46,198 L64.8,214.6" stroke="#2ea3dd" stroke-width="1.2" fill="none"/>
<path d="M44,196.2 L48.8,197 L45.4,200.8 Z M67,216.6 L62,215.8 L65.6,212 Z" fill="#2ea3dd"/>
<path d="M54.4,206.4 L63.6,194.4 L68.2,199 Z" fill="#6d6d6d"/>
<circle cx="54.4" cy="206.4" r="2" fill="#7cc8ef"/>
<path d="M45.6,245.8 L50.6,260 L56,246.5 L61.4,260 L66.4,245.8" fill="none" stroke="#6c6c6c" stroke-width="2.2"/>
<path d="M48.5,256 L61,268.6 L54,271.6 Z" fill="#666"/>
<rect x="46.5" y="254" width="4" height="4" fill="#7cc8ef"/>
<path d="M58.4,315 L65.6,324.6" stroke="#707070" stroke-width="3.6" stroke-linecap="round"/>
<circle cx="53.1" cy="308.8" r="7" fill="#fafafa" stroke="#7a7a7a" stroke-width="1.7"/>
<path d="M49.3,308.8 H56.9 M53.1,305 V312.6" stroke="#2ea3dd" stroke-width="2"/>
<path d="M50.4,355.2 L68.8,373.6 L62.4,380.8 L43.2,361.6 Z" fill="#a9d6f1" stroke="#707070" stroke-width="1.4" stroke-linejoin="round"/>
<path d="M48.2,358.4 L65,375.6" stroke="#d7edf9" stroke-width="2.2"/>
<path d="M52.5,362 l-2,2.2 M57,366.6 l-2,2.2 M61.5,371.2 l-2,2.2" stroke="#2ea3dd" stroke-width="1"/>
<path d="M47,414 L61,410 L48,418.6 L63.6,414.4 L49,423.2 L65.6,419 L50.4,427.6 L66.4,424 L52.4,431.6 L63,429.4" fill="none" stroke="#5e5e5e" stroke-width="1.9" stroke-linejoin="round"/>
<path d="M45,424.8 L66.2,416.8" stroke="#2ea3dd" stroke-width="1.7"/>
<circle cx="45" cy="424.8" r="2.1" fill="#bfe2f6" stroke="#2ea3dd" stroke-width="1.3"/>
<circle cx="66.2" cy="416.8" r="2.1" fill="#bfe2f6" stroke="#2ea3dd" stroke-width="1.3"/>
<path d="M42.4,476.8 H48 M64,476.8 H69.6 M48.8,465.6 L52,470.4 M63.2,465.6 L60,470.4" stroke="#2ea3dd" stroke-width="1.5" fill="none"/>
<path d="M56,463 V468" stroke="#a8d8f2" stroke-width="1.3"/>
<path d="M53.6,474.4 L63.4,485.4 L54.4,488.2 Z" fill="#676767"/>
<path d="M67.3,521.2 L64.4,517.8 L57,527.6 L55.8,531.6 L59.8,530.6 Z" fill="#6a6a6a"/>
<path d="M54,535 Q47,530.6 44.4,534.4 Q42.6,538.2 48,538.6 H53.6 Q58.4,538.8 57.8,542 Q56.8,545.4 52.4,543.4" fill="none" stroke="#727272" stroke-width="1.5"/>
<path d="M44,526.6 L47.8,527.4 L45.2,530.4 Z M64.2,541.8 L60.4,541.4 L62.8,538.2 Z" fill="#2ea3dd"/>
<circle cx="53.8" cy="535" r="1.8" fill="#7cc8ef"/>
<circle cx="56" cy="585.6" r="13" fill="#808080" stroke="#2ea3dd" stroke-width="1.7"/>
<text x="56" y="653.6" font-size="41" font-weight="bold" text-anchor="middle" fill="#787878" stroke="#787878" stroke-width="1.3" textLength="23.5" lengthAdjust="spacingAndGlyphs" style="font-family:'Liberation Serif',serif">T</text>
<path d="M52.5,686 H59 M52.5,700.6 H59 M47.2,692 V695.6 M64,692 V695.6" stroke="#2ea3dd" stroke-width="1" stroke-dasharray="1.6 1.4"/>
<path d="M47.2,684.0 c-1.2,-3.4 -6,-2.6 -5.6,1 c.3,2.6 3.4,4.4 5.6,6.6 c2.2,-2.2 5.3,-4 5.6,-6.6 c.4,-3.6 -4.4,-4.4 -5.6,-1 z" fill="#747474" stroke="#6a6a6a" stroke-width="1"/>
<path d="M64.0,684.0 c-1.2,-3.4 -6,-2.6 -5.6,1 c.3,2.6 3.4,4.4 5.6,6.6 c2.2,-2.2 5.3,-4 5.6,-6.6 c.4,-3.6 -4.4,-4.4 -5.6,-1 z" fill="#b9e0f7" stroke="#2ea3dd" stroke-width="1"/>
<path d="M47.2,698.4 c-1.2,-3.4 -6,-2.6 -5.6,1 c.3,2.6 3.4,4.4 5.6,6.6 c2.2,-2.2 5.3,-4 5.6,-6.6 c.4,-3.6 -4.4,-4.4 -5.6,-1 z" fill="#b9e0f7" stroke="#2ea3dd" stroke-width="1"/>
<path d="M64.0,698.4 c-1.2,-3.4 -6,-2.6 -5.6,1 c.3,2.6 3.4,4.4 5.6,6.6 c2.2,-2.2 5.3,-4 5.6,-6.6 c.4,-3.6 -4.4,-4.4 -5.6,-1 z" fill="#b9e0f7" stroke="#2ea3dd" stroke-width="1"/>
<path d="M42.6,749 Q43.6,740.4 55,738.6 Q67.6,737.4 69.4,745.6 Q70.4,753.6 62.8,758.6 Q55.8,762.4 52.4,759.6 Q50.4,757.2 52.8,754.6 Q54.4,752.2 51,752.4 Q42.2,754.4 42.6,749 Z" fill="#6c6c6c" stroke="#5c5c5c" stroke-width=".8"/>
<circle cx="48.8" cy="747.8" r="2.3" fill="#2ea3dd"/>
<circle cx="53.6" cy="742.6" r="2.1" fill="#aedcf6"/>
<circle cx="60.2" cy="741.8" r="2.2" fill="#2ea3dd"/>
<circle cx="64.2" cy="748" r="2.2" fill="#aedcf6"/>
<circle cx="57.3" cy="754.6" r="1.7" fill="#e6e6e6"/>
<rect x="41.6" y="799" width="4" height="9.4" rx="1" fill="#5e5e5e"/><rect x="66.4" y="799" width="4" height="9.4" rx="1" fill="#5e5e5e"/>
<rect x="45.2" y="793.2" width="21.6" height="20.6" rx="3.2" fill="#b3dbf5" stroke="#5e5e5e" stroke-width="2.6"/>
<rect x="48.4" y="796.2" width="15.2" height="14.6" fill="none" stroke="#2ea3dd" stroke-width=".9" stroke-dasharray="1.4 1.2"/>
<rect x="42.4" y="844" width="27.2" height="28" fill="#ebebeb"/>
<path d="M50.4,844.5 V871.5 M43,851.2 H69 M44.8,870.4 L68,845.6" stroke="#2ea3dd" stroke-width="1.5" stroke-dasharray="2.6 2" fill="none"/>
<path d="M57.6,859.2 L67.4,864.2 L62.2,867.6 Z" fill="#626262"/>
</svg>
</body></html>
